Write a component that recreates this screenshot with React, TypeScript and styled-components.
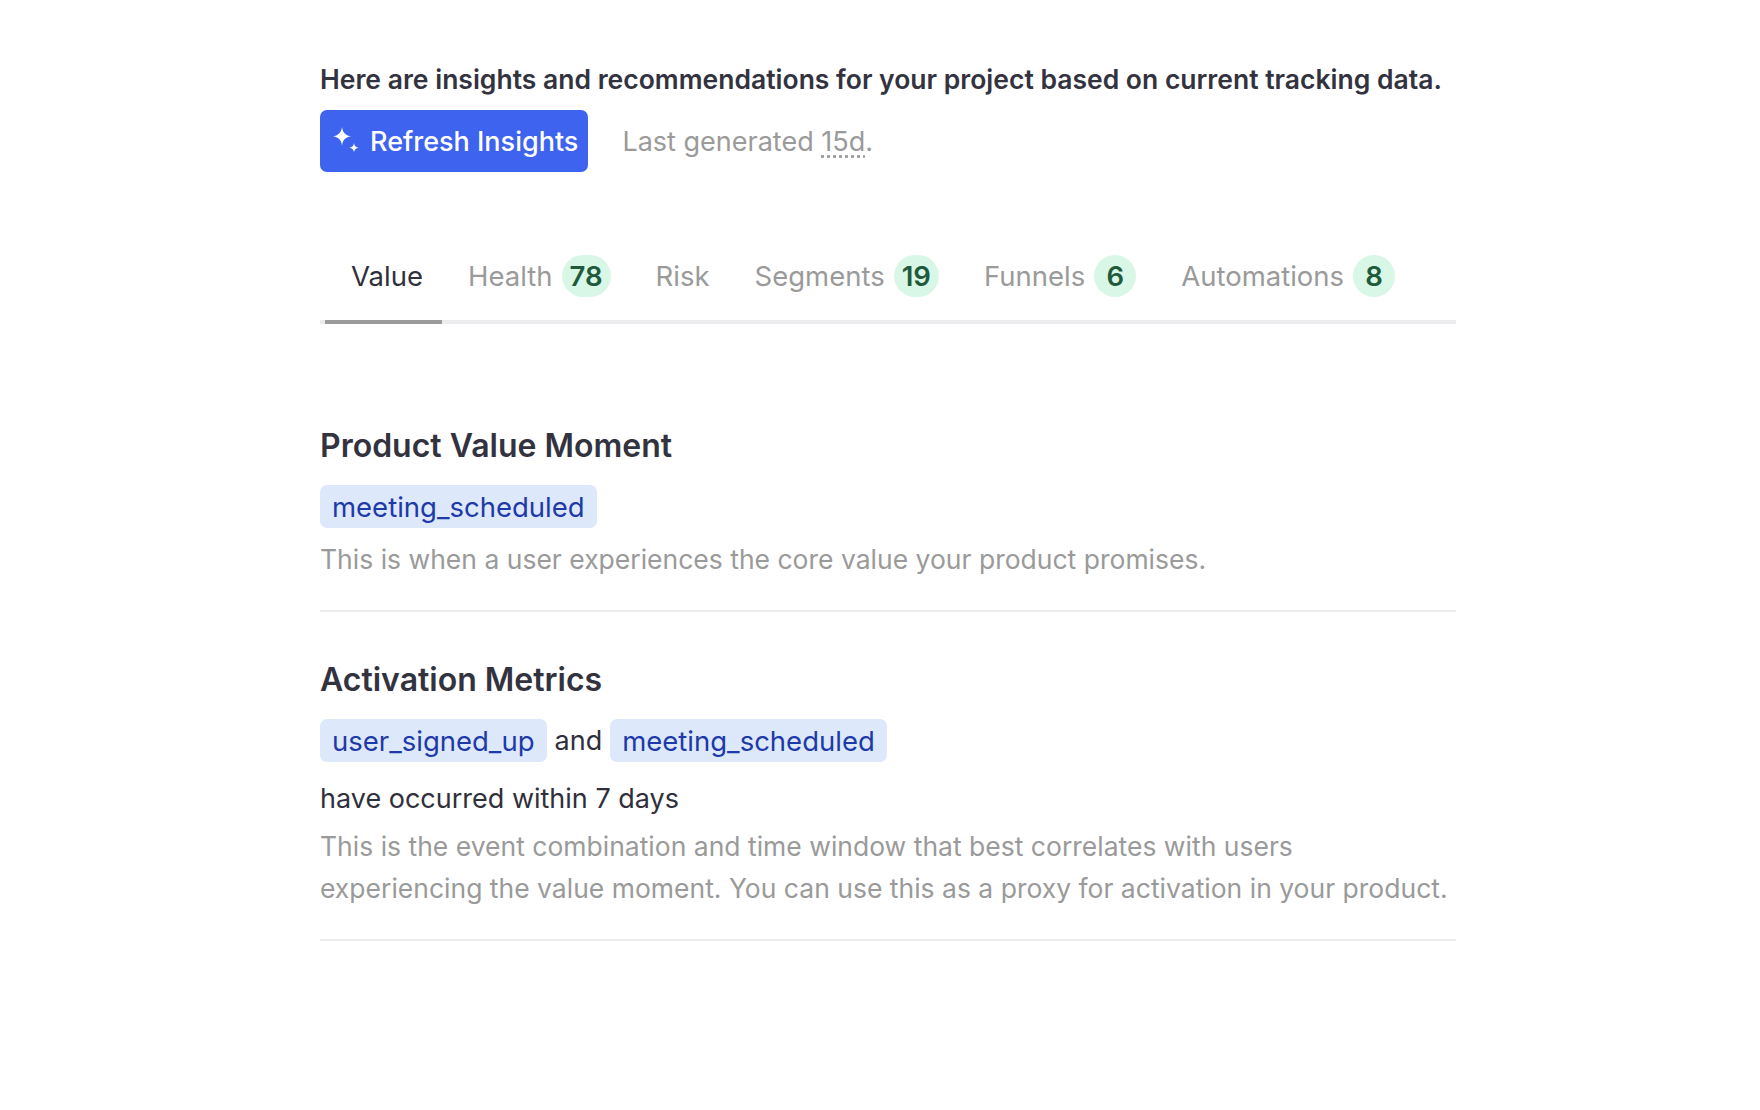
import React from 'react';
import styled, { createGlobalStyle } from 'styled-components';

const Global = createGlobalStyle`
  body { margin: 0; background: #fff; font-family: Inter, "Noto Sans", sans-serif; color: #2f2f3b; }
`;

const Page = styled.div`
  width: 1136px;
  margin-left: 320px;
  padding-top: 58px;
`;

const Intro = styled.p`
  margin: 0;
  font-size: 26.5px;
  font-weight: 600;
  line-height: 42px;
  color: #33333f;
`;

const ActionRow = styled.div`
  display: flex;
  align-items: center;
  gap: 34px;
  margin-top: 10px;
`;

const RefreshButton = styled.button`
  display: flex;
  align-items: center;
  gap: 8px;
  height: 62px;
  padding: 0 10px;
  border: 0;
  border-radius: 7px;
  background: #3e63ee;
  color: #fff;
  font-family: inherit;
  font-size: 27px;
  font-weight: 500;
`;

const Muted = styled.span`
  font-size: 27px;
  color: #9a9a9a;
  abbr { text-decoration: underline dotted; text-underline-offset: 5px; }
`;

const Tabs = styled.div`
  display: flex;
  margin-top: 68px;
  border-bottom: 4px solid #ececef;
`;

const Tab = styled.div<{ active?: boolean }>`
  display: flex;
  align-items: center;
  gap: 9px;
  padding: 0 19px 8px 26px;
  height: 80px;
  box-sizing: border-box;
  font-size: 27.5px;
  color: ${p => (p.active ? '#30303c' : '#9a9a9a')};
  position: relative;
  &:first-child { margin-left: 5px; }
  &::after {
    content: '';
    display: ${p => (p.active ? 'block' : 'none')};
    position: absolute;
    left: 0; right: 0; bottom: -4px;
    height: 4px;
    background: #9a9a9a;
  }
`;

const Badge = styled.span`
  min-width: 42px;
  height: 42px;
  padding: 0 8px;
  box-sizing: border-box;
  border-radius: 21px;
  background: #d9f7e6;
  color: #1f5a3c;
  font-weight: 600;
  display: flex;
  align-items: center;
  justify-content: center;
`;

const Section = styled.section`
  padding: 48px 0 30px;
  border-bottom: 2px solid #ececef;
  &:first-of-type { margin-top: 62px; padding-top: 40px; }
`;

const Heading = styled.h2`
  margin: 0 0 20px;
  font-size: 32px;
  font-weight: 600;
  color: #33333f;
`;

const ChipRow = styled.div`
  display: flex;
  align-items: center;
  gap: 8px;
  font-size: 27px;
`;

const Chip = styled.span`
  padding: 0 12px;
  height: 43px;
  display: inline-flex;
  align-items: center;
  border-radius: 7px;
  background: #dde8fb;
  color: #1d3aa8;
  font-size: 27.5px;
`;

const Plain = styled.p`
  margin: 20px 0 0;
  font-size: 27px;
  color: #30303c;
`;

const Desc = styled.p`
  margin: 10px 0 0;
  font-size: 26.5px;
  line-height: 42px;
  color: #9a9a9a;
`;

const Sparkle = () => (
  <svg width="32" height="32" viewBox="0 0 24 24" fill="#fff">
    <path d="M9 1.5c.5 4.2 2.8 6.5 7 7-4.2.5-6.5 2.8-7 7-.5-4.2-2.8-6.5-7-7 4.2-.5 6.5-2.8 7-7z" />
    <path d="M18 13.5c.3 2.2 1.3 3.2 3.5 3.5-2.2.3-3.2 1.3-3.5 3.5-.3-2.2-1.3-3.2-3.5-3.5 2.2-.3 3.2-1.3 3.5-3.5z" />
  </svg>
);

const tabs: { label: string; count?: number }[] = [
  { label: 'Value' },
  { label: 'Health', count: 78 },
  { label: 'Risk' },
  { label: 'Segments', count: 19 },
  { label: 'Funnels', count: 6 },
  { label: 'Automations', count: 8 },
];

export default function App() {
  return (
    <Page>
      <Global />
      <Intro>Here are insights and recommendations for your project based on current tracking data.</Intro>
      <ActionRow>
        <RefreshButton>
          <Sparkle />
          Refresh Insights
        </RefreshButton>
        <Muted>
          Last generated <abbr>15d</abbr>.
        </Muted>
      </ActionRow>
      <Tabs>
        {tabs.map((t, i) => (
          <Tab key={t.label} active={i === 0}>
            {t.label}
            {t.count !== undefined && <Badge>{t.count}</Badge>}
          </Tab>
        ))}
      </Tabs>
      <Section>
        <Heading>Product Value Moment</Heading>
        <ChipRow>
          <Chip>meeting_scheduled</Chip>
        </ChipRow>
        <Desc>This is when a user experiences the core value your product promises.</Desc>
      </Section>
      <Section>
        <Heading>Activation Metrics</Heading>
        <ChipRow>
          <Chip>user_signed_up</Chip>
          and
          <Chip>meeting_scheduled</Chip>
        </ChipRow>
        <Plain>have occurred within 7 days</Plain>
        <Desc>
          This is the event combination and time window that best correlates with users experiencing the value
          moment. You can use this as a proxy for activation in your product.
        </Desc>
      </Section>
    </Page>
  );
}
